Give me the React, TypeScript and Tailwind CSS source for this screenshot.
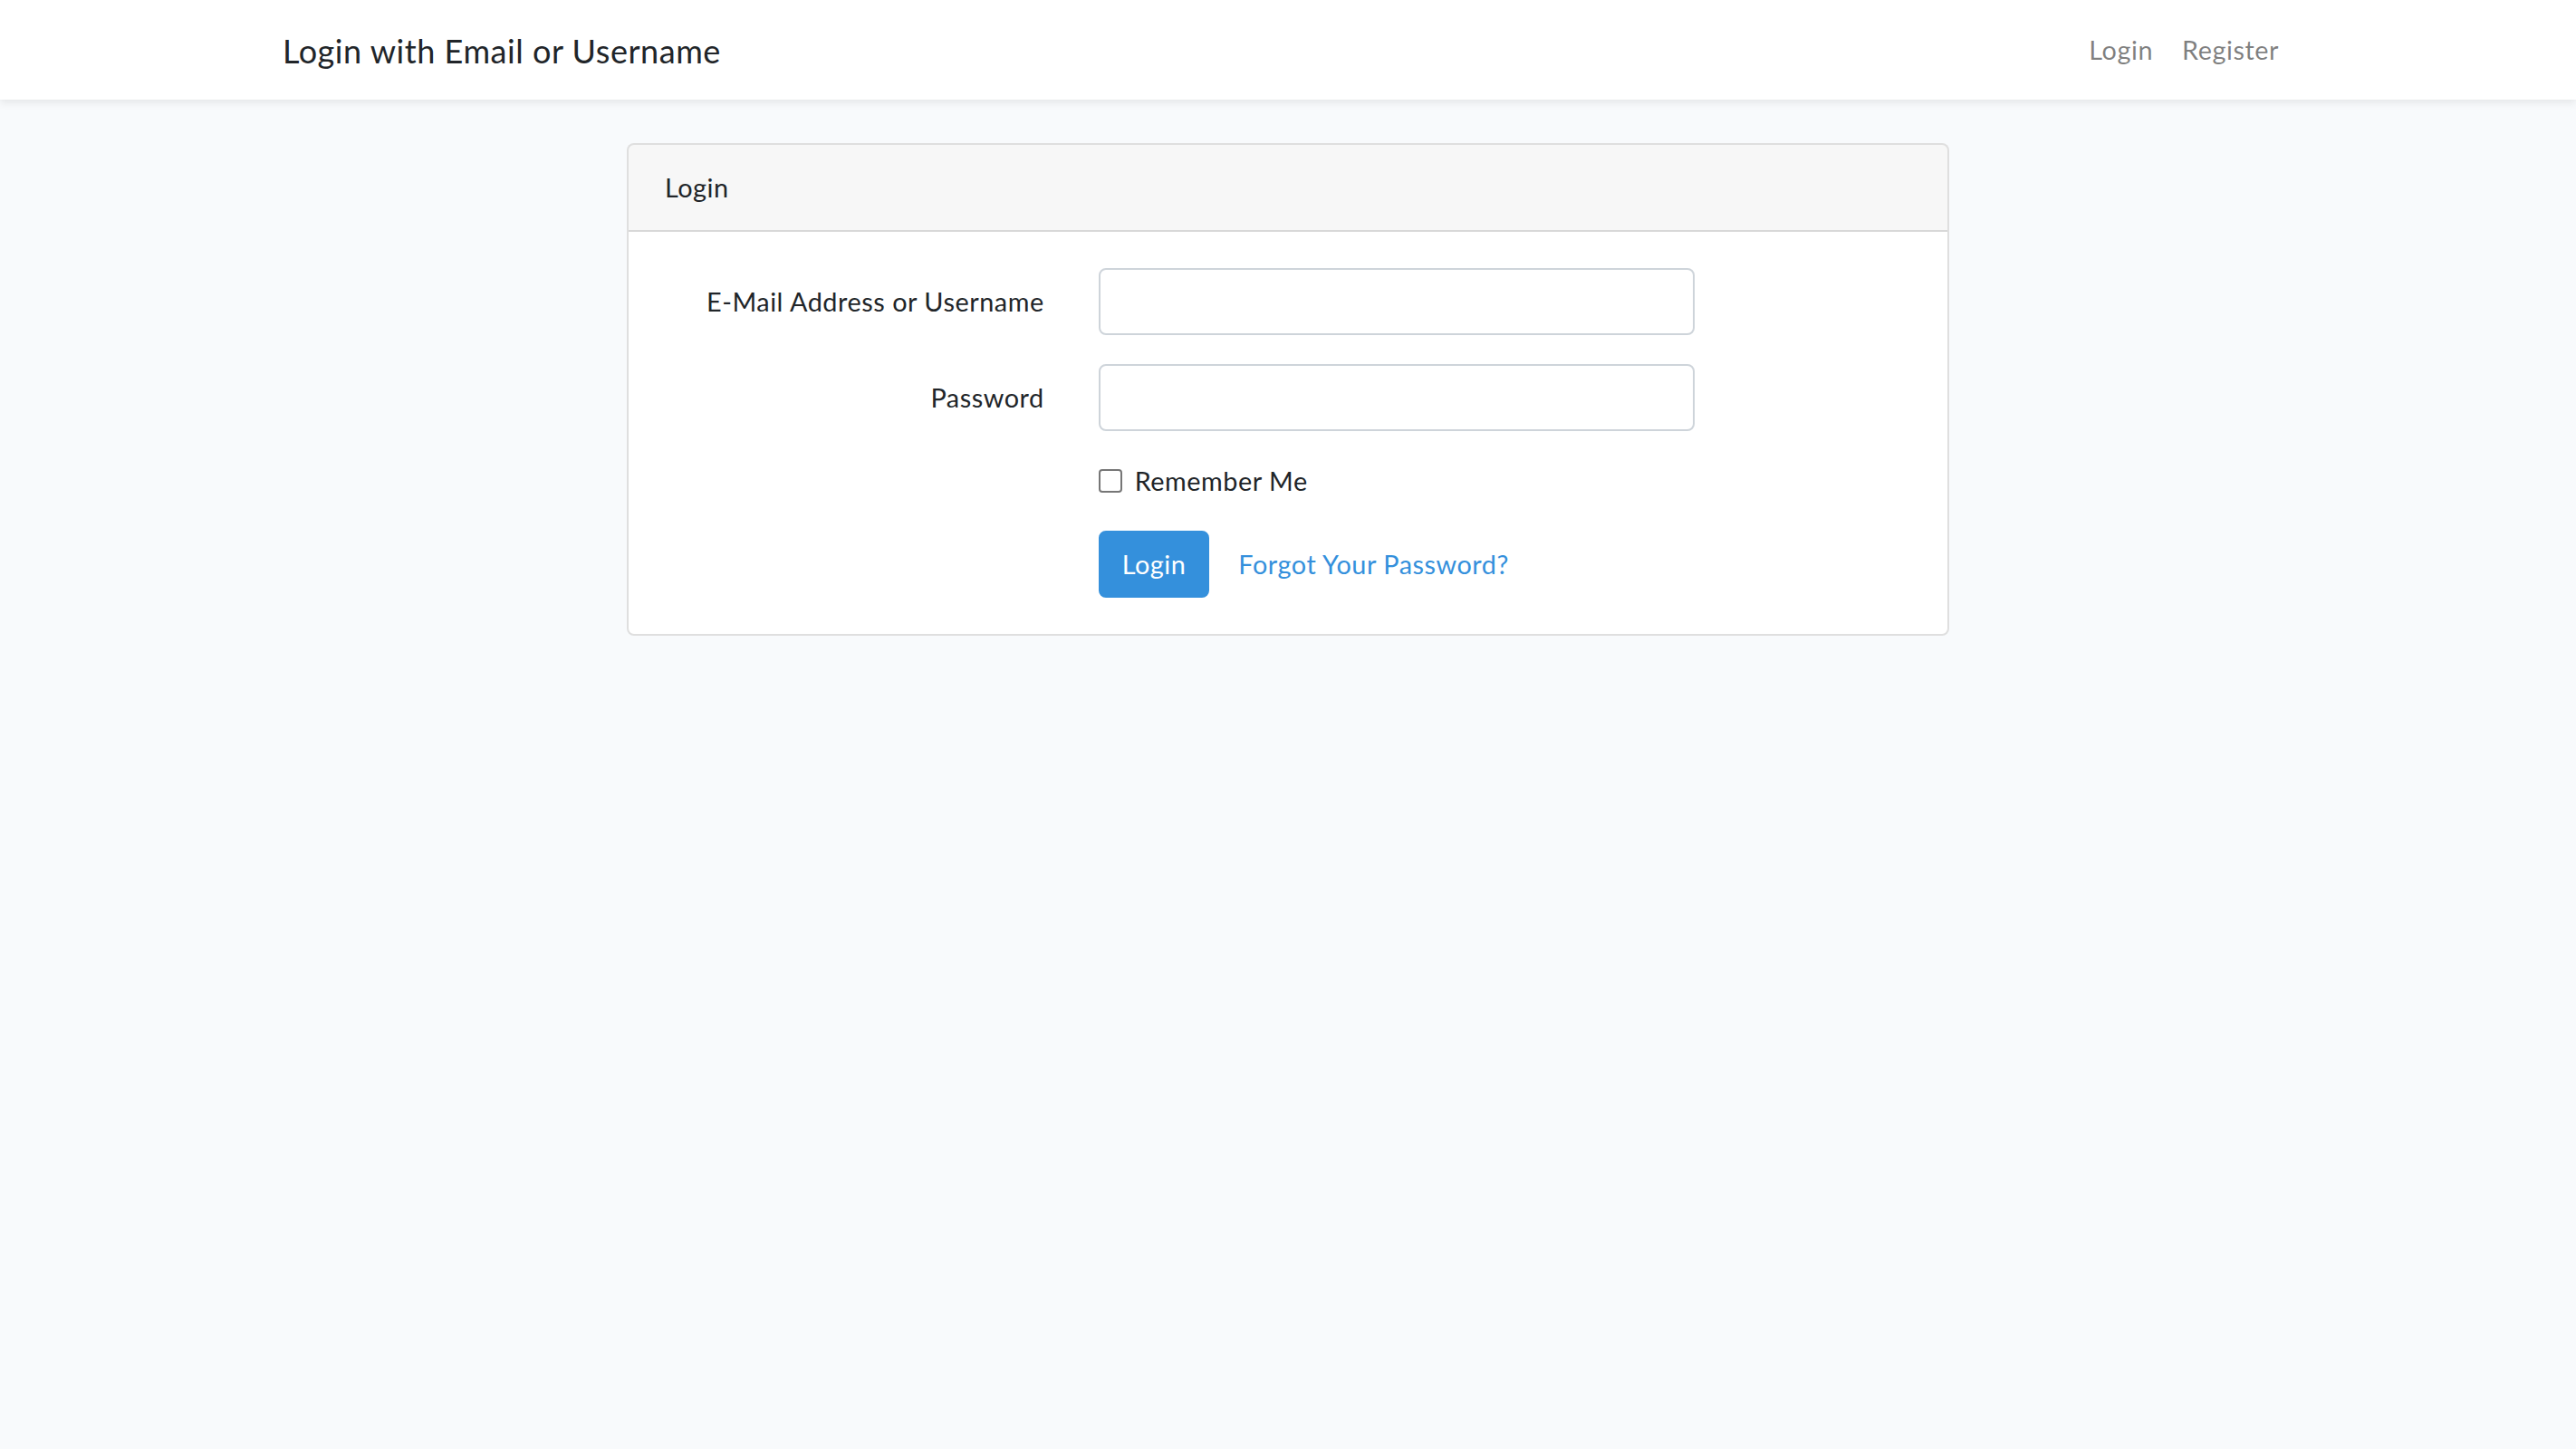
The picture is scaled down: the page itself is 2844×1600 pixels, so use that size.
export default function App() {
  return (
    <div className="min-h-screen bg-[#f8fafc] text-[#212529] [font-family:Lato,'Open_Sans',sans-serif] text-[28.8px] leading-[46px] tracking-[0.019em]">
      <nav className="relative bg-white py-4 shadow-[0_4px_8px_rgba(0,0,0,0.075)]">
        <div className="mx-auto flex max-w-[2280px] items-center justify-between px-[30px]">
          <a href="#" className="pt-[12px] pb-[8px] text-[36px] leading-[57.6px] text-[#212529]">
            Login with Email or Username
          </a>
          <ul className="flex items-center">
            <li>
              <a href="#" className="block px-4 py-4 text-black/50">
                Login
              </a>
            </li>
            <li>
              <a href="#" className="block px-4 py-4 text-black/50">
                Register
              </a>
            </li>
          </ul>
        </div>
      </nav>

      <main className="py-12">
        <div className="mx-auto max-w-[2280px] px-[30px]">
          <div className="-mx-[30px] flex justify-center">
            <div className="w-2/3 px-[30px]">
              <div className="rounded-[8px] border-2 border-black/[0.125] bg-white">
                <div className="rounded-t-[6px] border-b-2 border-black/[0.125] bg-black/[0.03] px-10 py-6">Login</div>
                <div className="p-10">
                  <form>
                    <div className="-mx-[30px] mb-8 flex">
                      <label className="w-1/3 px-[30px] py-[14px] text-right">E-Mail Address or Username</label>
                      <div className="w-1/2 px-[30px]">
                        <input
                          type="text"
                          className="block h-[74px] w-full rounded-[8px] border-2 border-[#ced4da] bg-white px-6 outline-none"
                        />
                      </div>
                    </div>

                    <div className="-mx-[30px] mb-8 flex">
                      <label className="w-1/3 px-[30px] py-[14px] text-right">Password</label>
                      <div className="w-1/2 px-[30px]">
                        <input
                          type="password"
                          className="block h-[74px] w-full rounded-[8px] border-2 border-[#ced4da] bg-white px-6 outline-none"
                        />
                      </div>
                    </div>

                    <div className="-mx-[30px] mb-8 flex">
                      <div className="ml-[33.3333%] w-1/2 px-[30px]">
                        <div className="flex items-start gap-[14px]">
                          <input
                            type="checkbox"
                            className="mt-[10px] h-[26px] w-[26px] shrink-0 appearance-none rounded-[4px] border-2 border-[#767676] bg-white"
                          />
                          <label>Remember Me</label>
                        </div>
                      </div>
                    </div>

                    <div className="-mx-[30px] flex">
                      <div className="ml-[33.3333%] w-1/2 px-[30px]">
                        <div className="flex items-center gap-[8px]">
                          <button
                            type="button"
                            className="rounded-[8px] border-2 border-[#3490dc] bg-[#3490dc] px-6 py-[12px] text-white"
                          >
                            Login
                          </button>
                          <a href="#" className="px-6 py-[12px] text-[#3490dc]">
                            Forgot Your Password?
                          </a>
                        </div>
                      </div>
                    </div>
                  </form>
                </div>
              </div>
            </div>
          </div>
        </div>
      </main>
    </div>
  );
}
